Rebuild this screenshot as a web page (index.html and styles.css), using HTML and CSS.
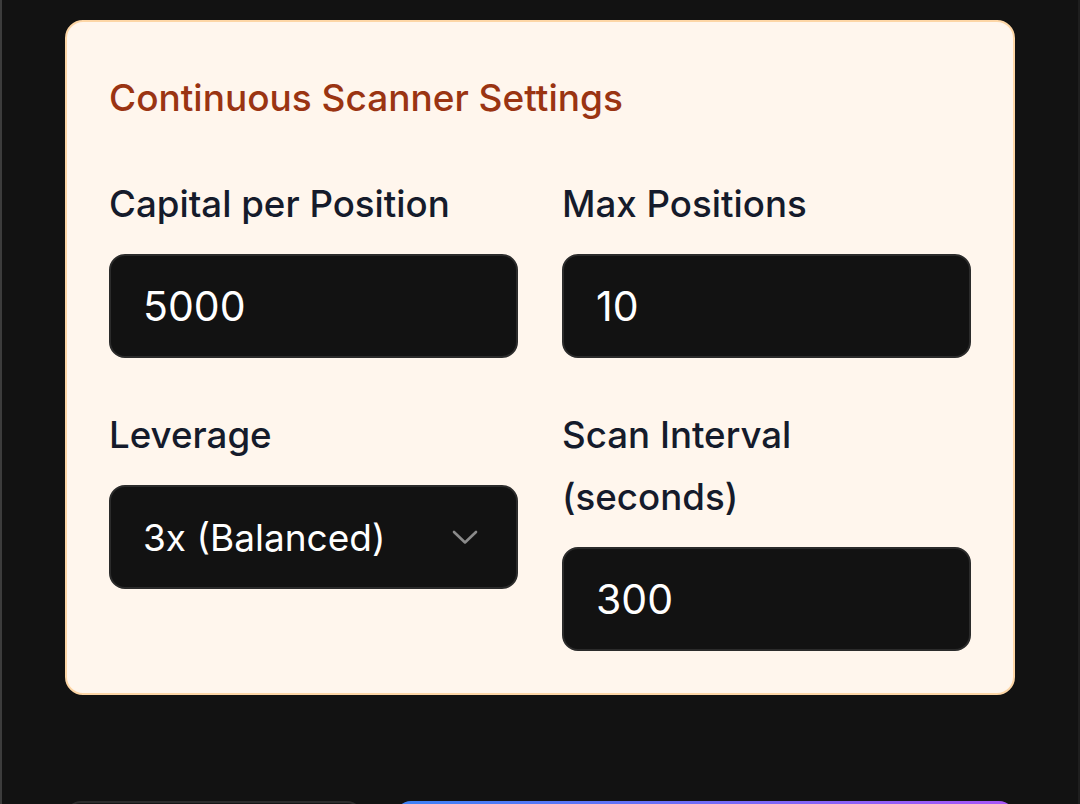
FILE: index.html
```html
<!DOCTYPE html>
<html lang="en">
<head>
<meta charset="utf-8">
<title>Continuous Scanner Settings</title>
<link rel="stylesheet" href="styles.css">
</head>
<body>
<div class="page">
  <section class="card">
    <h2 class="title">Continuous Scanner Settings</h2>
    <div class="grid">
      <div class="field">
        <label class="label" for="cap">Capital per Position</label>
        <input class="input" id="cap" type="text" value="5000">
      </div>
      <div class="field">
        <label class="label" for="maxpos">Max Positions</label>
        <input class="input" id="maxpos" type="text" value="10">
      </div>
      <div class="field">
        <label class="label">Leverage</label>
        <div class="select">
          <span>3x (Balanced)</span>
          <svg class="chev" width="26" height="15" viewBox="0 0 26 15"><path d="M2 2 L13 12.5 L24 2" fill="none" stroke="#8a8a8a" stroke-width="2.6" stroke-linecap="round" stroke-linejoin="round"/></svg>
        </div>
      </div>
      <div class="field">
        <label class="label" for="interval">Scan Interval (seconds)</label>
        <input class="input" id="interval" type="text" value="300">
      </div>
    </div>
  </section>
  <div class="actions">
    <button class="btn btn-secondary">Cancel</button>
    <button class="btn btn-primary">Start Scanner</button>
  </div>
</div>
</body>
</html>
```
FILE: styles.css
```css
* { box-sizing: border-box; }
html, body {
  margin: 0;
  padding: 0;
  background: #121212;
  font-family: Inter, "Noto Sans", sans-serif;
  overflow: hidden;
}
.page {
  min-height: 804px;
  border-left: 2px solid #3c3c3c;
  border-right: 2px solid #1e1e1e;
  padding: 20px 63px 0 63px;
}
.card {
  background: #fff6ed;
  border: 2px solid #fdd6a6;
  border-radius: 18px;
  padding: 46px 42px 42px 42px;
}
.title {
  margin: 0 0 45px 0;
  font-size: 37px;
  line-height: 60px;
  font-weight: 500;
  color: #9a3412;
}
.grid {
  display: grid;
  grid-template-columns: 1fr 1fr;
  column-gap: 44px;
  row-gap: 46px;
  align-items: start;
}
.field {
  display: flex;
  flex-direction: column;
}
.label {
  font-size: 36.7px;
  line-height: 62px;
  font-weight: 500;
  color: #151b2b;
  margin-bottom: 19px;
}
.input, .select {
  appearance: none;
  width: 100%;
  height: 104px;
  background: #121212;
  border: 2px solid #2b2b2b;
  border-radius: 16px;
  padding: 0 32px;
  font-family: Inter, "Noto Sans", sans-serif;
  font-size: 41px;
  color: #ffffff;
  outline: none;
  margin: 0;
}
.select {
  display: flex;
  align-items: center;
  justify-content: space-between;
  font-size: 37px;
  padding-right: 38px;
}
.chev { display: block; }
.actions {
  display: flex;
  gap: 32px;
  margin-top: 106px;
}
.btn {
  height: 100px;
  border-radius: 16px;
  font-family: Inter, sans-serif;
  font-size: 32px;
  color: #fff;
}
.btn-secondary {
  width: 298px;
  background: #161616;
  border: 2px solid #2c2c2c;
}
.btn-primary {
  flex: 1;
  border: none;
  background: linear-gradient(90deg, #3b82f6, #a855f7);
}
```
